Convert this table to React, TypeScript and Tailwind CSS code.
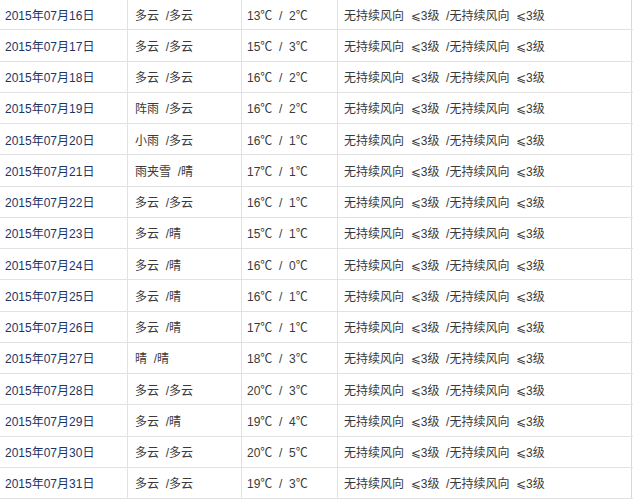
import React from "react";

const rows: [string, string, string, string][] = [
  ["2015年07月16日", "多云 /多云", "13℃ / 2℃"],
  ["2015年07月17日", "多云 /多云", "15℃ / 3℃"],
  ["2015年07月18日", "多云 /多云", "16℃ / 2℃"],
  ["2015年07月19日", "阵雨 /多云", "16℃ / 2℃"],
  ["2015年07月20日", "小雨 /多云", "16℃ / 1℃"],
  ["2015年07月21日", "雨夹雪 /晴", "17℃ / 1℃"],
  ["2015年07月22日", "多云 /多云", "16℃ / 1℃"],
  ["2015年07月23日", "多云 /晴", "15℃ / 1℃"],
  ["2015年07月24日", "多云 /晴", "16℃ / 0℃"],
  ["2015年07月25日", "多云 /晴", "16℃ / 1℃"],
  ["2015年07月26日", "多云 /晴", "17℃ / 1℃"],
  ["2015年07月27日", "晴 /晴", "18℃ / 3℃"],
  ["2015年07月28日", "多云 /多云", "20℃ / 3℃"],
  ["2015年07月29日", "多云 /晴", "19℃ / 4℃"],
  ["2015年07月30日", "多云 /多云", "20℃ / 5℃"],
  ["2015年07月31日", "多云 /多云", "19℃ / 3℃"],
].map((r) => [r[0], r[1], r[2], "无持续风向 ⩽3级 /无持续风向 ⩽3级"] as [string, string, string, string]);

export default function App() {
  return (
    <div
      className="w-[633px] h-[500px] bg-white overflow-hidden text-[12px] text-[#3a3a3a]"
      style={{ fontFamily: '"Liberation Sans", "Noto Sans CJK SC", "DejaVu Sans", sans-serif' }}
    >
      <div className="flex flex-col -mt-px">
        {rows.map((r, i) => (
          <div key={i} className="flex h-[31.25px] border-b border-[#e2e2e2] w-[633px]">
            <div className="w-[128px] pl-[5px] pt-[3px] flex items-center text-[#1c3566] border-r border-[#e2e2e2]">
              {r[0]}
            </div>
            <div className="w-[114px] pl-[7px] pt-[3px] flex items-center border-r border-[#e2e2e2] whitespace-pre">
              {r[1].replace(" /", "  /")}
            </div>
            <div className="w-[96px] pl-[5px] pt-[3px] flex items-center border-r border-[#e2e2e2] whitespace-pre">
              {r[2].replace(" / ", "  /  ")}
            </div>
            <div className="w-[294px] pl-[6px] pt-[3px] flex items-center border-r border-[#d8d8d8] whitespace-pre">
              {r[3].replace(/ ⩽/g, "  ⩽").replace(" /", "  /")}
            </div>
          </div>
        ))}
      </div>
    </div>
  );
}
